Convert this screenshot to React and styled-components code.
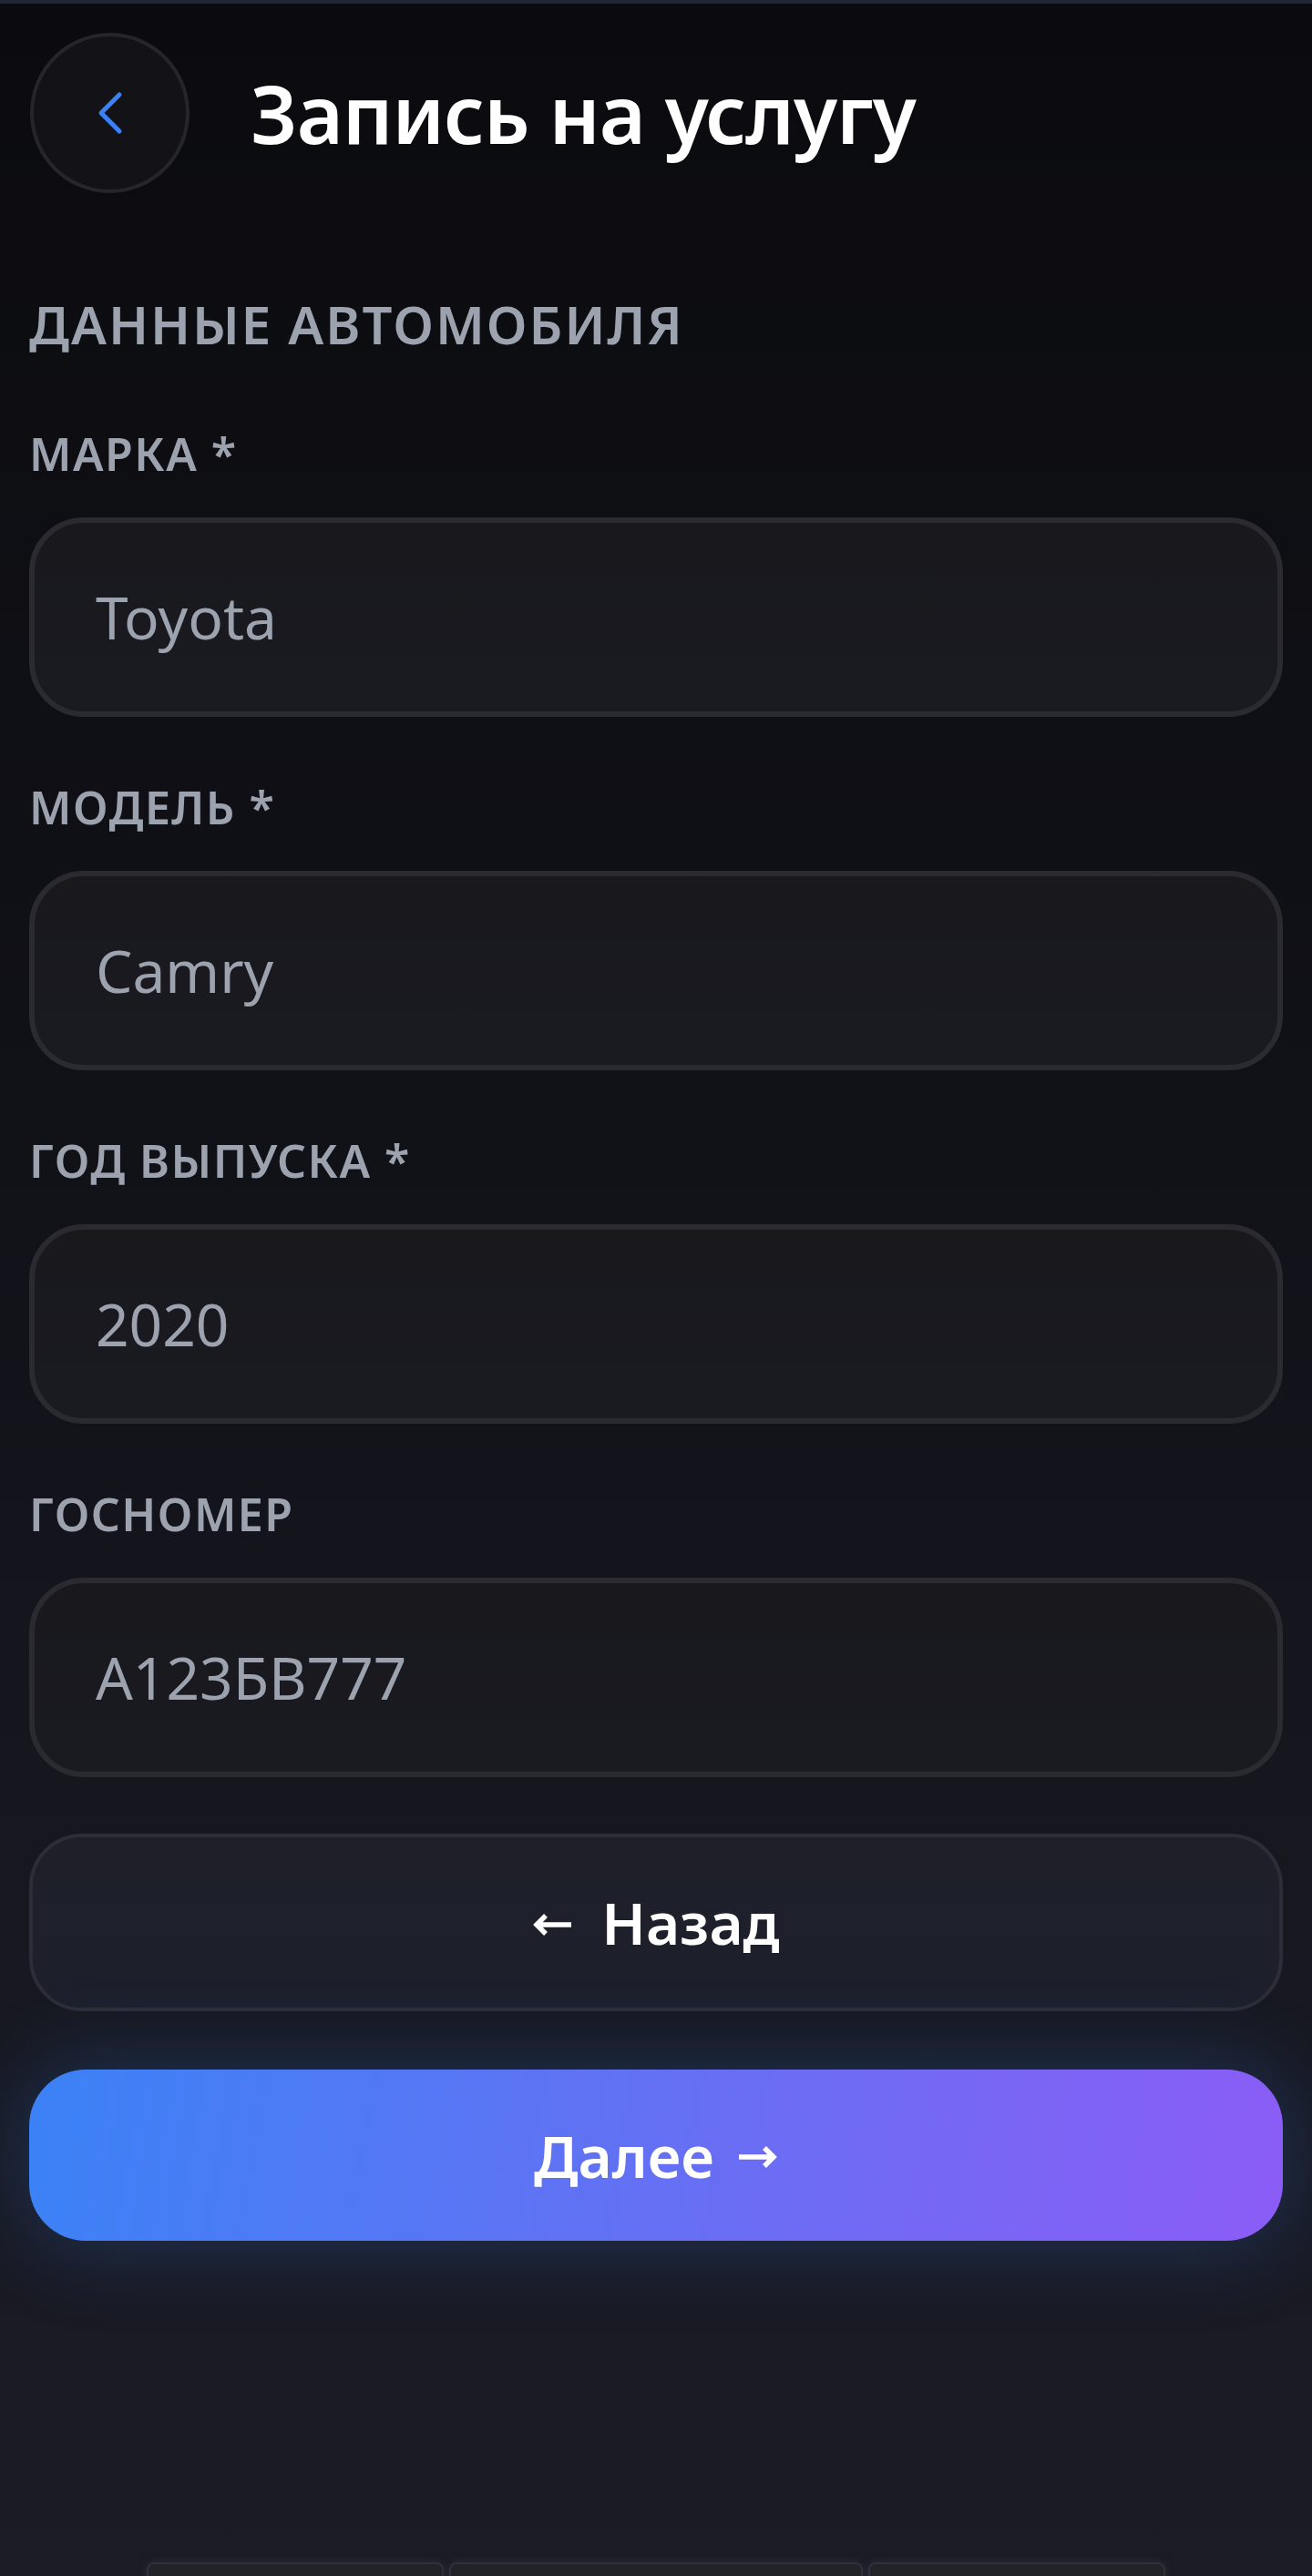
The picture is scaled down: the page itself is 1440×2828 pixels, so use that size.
import React from 'react'
import styled, { createGlobalStyle } from 'styled-components'
import { ChevronLeft } from 'lucide-react'

const GlobalStyle = createGlobalStyle`
  html, body {
    margin: 0;
    padding: 0;
    background: #0b0b0f;
  }

  * {
    box-sizing: border-box;
  }
`

const Page = styled.div`
  display: flex;
  flex-direction: column;
  width: 1440px;
  height: 2828px;
  overflow: hidden;
  border-top: 4px solid #1f2634;
  background: linear-gradient(180deg, #0b0b0f 0%, #111218 45%, #1b1c26 100%);
  font-family: 'Noto Sans', 'Open Sans', sans-serif;
`

const Header = styled.header`
  display: flex;
  align-items: center;
  gap: 67px;
  padding: 32px 32px 0 33px;
`

const BackButton = styled.button`
  display: flex;
  align-items: center;
  justify-content: center;
  width: 175px;
  height: 176px;
  padding: 0;
  border: 4px solid #25252b;
  border-radius: 50%;
  background: #131317;
  color: #3b82f6;
  cursor: pointer;
`

const Title = styled.h1`
  margin: 0;
  color: #ffffff;
  font-size: 88px;
  font-weight: 600;
  line-height: 1;
  letter-spacing: -1px;
`

const Form = styled.form`
  display: flex;
  flex-direction: column;
  padding: 0 32px;
`

const SectionTitle = styled.h2`
  margin: 115px 0 0;
  color: #9ca3af;
  font-size: 58px;
  font-weight: 600;
  line-height: 1;
  letter-spacing: 2px;
  text-transform: uppercase;
`

const Fields = styled.div`
  display: flex;
  flex-direction: column;
  gap: 74px;
  margin-top: 88px;
`

const Field = styled.label`
  display: flex;
  flex-direction: column;
  gap: 45px;
`

const Label = styled.span`
  color: #9ca3af;
  font-size: 50px;
  font-weight: 600;
  line-height: 1;
  letter-spacing: 1.5px;
  text-transform: uppercase;
`

const Input = styled.input`
  width: 100%;
  height: 219px;
  padding: 0 67px;
  border: 6px solid #2a2a30;
  border-radius: 60px;
  background: linear-gradient(180deg, #18181d 0%, #1a1b21 100%);
  color: #9ca3af;
  font-family: inherit;
  font-size: 64px;
  outline: none;
`

const Actions = styled.div`
  display: flex;
  flex-direction: column;
  gap: 64px;
  margin-top: 62px;
`

const Button = styled.button`
  display: flex;
  align-items: center;
  justify-content: center;
  gap: ${({ $primary }) => ($primary ? '24px' : '30px')};
  width: 100%;
  color: #ffffff;
  font-family: inherit;
  font-size: 64px;
  font-weight: 600;
  cursor: pointer;
  height: ${({ $primary }) => ($primary ? '188px' : '195px')};
  border-radius: ${({ $primary }) => ($primary ? '62px' : '58px')};
  border: ${({ $primary }) => ($primary ? 'none' : '4px solid #2c2d36')};
  background: ${({ $primary }) =>
    $primary
      ? 'linear-gradient(100deg, #3b82f6 0%, #6470f3 50%, #8b5cf6 100%)'
      : 'linear-gradient(180deg, #1e1f29 0%, #1d202c 100%)'};
  box-shadow: ${({ $primary }) =>
    $primary ? '0 0 90px 10px rgba(59, 130, 246, 0.22)' : 'none'};
`

const ArrowIcon = styled.svg`
  width: 46px;
  height: 26px;
  margin-top: 4px;
  flex-shrink: 0;
`

const Arrow = ({ left }) => (
  <ArrowIcon viewBox="0 0 46 26" fill="none" stroke="currentColor" strokeWidth="5.5">
    {left ? (
      <path d="M43 13H5M15 3 5 13l10 10" />
    ) : (
      <path d="M3 13h38M31 3l10 10-10 10" />
    )}
  </ArrowIcon>
)

const Tabs = styled.nav`
  display: flex;
  gap: 6px;
  height: 15px;
  margin-top: auto;
  padding: 0 161px;
`

const Tab = styled.div`
  flex: ${({ $grow }) => $grow};
  height: 40px;
  border: 2px solid #2f3038;
  border-radius: 8px;
  background: #222329;
  box-shadow: 0 0 8px rgba(60, 62, 74, 0.5);
`

const fields = [
  { label: 'Марка *', value: 'Toyota' },
  { label: 'Модель *', value: 'Camry' },
  { label: 'Год выпуска *', value: '2020' },
  { label: 'Госномер', value: 'А123БВ777' },
]

const App = () => (
  <>
    <GlobalStyle />
    <Page>
      <Header>
        <BackButton type="button" aria-label="Назад">
          <ChevronLeft size={80} strokeWidth={1.5} />
        </BackButton>
        <Title>Запись на услугу</Title>
      </Header>

      <Form onSubmit={(e) => e.preventDefault()}>
        <SectionTitle>Данные автомобиля</SectionTitle>
        <Fields>
          {fields.map((field) => (
            <Field key={field.label}>
              <Label>{field.label}</Label>
              <Input defaultValue={field.value} readOnly />
            </Field>
          ))}
        </Fields>
        <Actions>
          <Button type="button">
            <Arrow left />
            Назад
          </Button>
          <Button type="submit" $primary>
            Далее
            <Arrow />
          </Button>
        </Actions>
      </Form>

      <Tabs>
        <Tab $grow={326} />
        <Tab $grow={454} />
        <Tab $grow={326} />
      </Tabs>
    </Page>
  </>
)

export default App
